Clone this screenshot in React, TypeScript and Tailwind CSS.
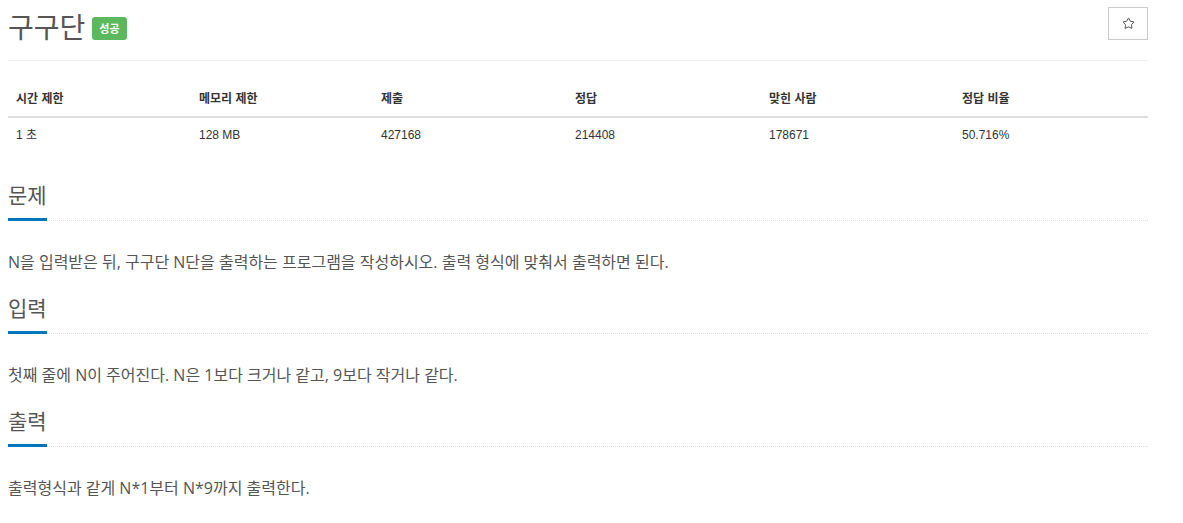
import { Star } from 'lucide-react';

const stats = [
  { label: '시간 제한', value: '1 초', w: 'w-[183px]' },
  { label: '메모리 제한', value: '128 MB', w: 'w-[182px]' },
  { label: '제출', value: '427168', w: 'w-[194px]' },
  { label: '정답', value: '214408', w: 'w-[194px]' },
  { label: '맞힌 사람', value: '178671', w: 'w-[193px]' },
  { label: '정답 비율', value: '50.716%', w: 'flex-1' },
];

const sections = [
  { title: '문제', body: 'N을 입력받은 뒤, 구구단 N단을 출력하는 프로그램을 작성하시오. 출력 형식에 맞춰서 출력하면 된다.' },
  { title: '입력', body: '첫째 줄에 N이 주어진다. N은 1보다 크거나 같고, 9보다 작거나 같다.' },
  { title: '출력', body: '출력형식과 같게 N*1부터 N*9까지 출력한다.' },
];

function Section({ title, body, first }: { title: string; body: string; first?: boolean }) {
  return (
    <section className={first ? 'mt-[28px]' : 'mt-[20px]'}>
      <div className="border-b border-dotted border-[#ddd]">
        <h2 className="-mb-px inline-block border-b-[3px] border-[#0076c0] pb-[8px] text-[21px] leading-[30px] text-[#555]">
          {title}
        </h2>
      </div>
      <p className="mt-[30px] text-[16px] leading-[22px] text-[#555]">{body}</p>
    </section>
  );
}

export default function App() {
  return (
    <div
      className="min-h-screen bg-white px-2"
      style={{ fontFamily: '"Open Sans", "Noto Sans CJK KR", sans-serif' }}
    >
      <div className="w-[1140px]">
        <div className="flex h-[61px] items-start justify-between border-b border-[#eee]">
          <div className="flex items-center gap-[7px] pt-[8px]">
            <h1 className="text-[28px] leading-[38px] text-[#555]">구구단</h1>
            <span className="mt-[3px] rounded-[3px] bg-[#5cb85c] px-[7px] py-[3px] text-[11px] font-bold leading-[17px] text-white">
              성공
            </span>
          </div>
          <button className="mt-[7px] flex h-[33px] w-[40px] items-center justify-center border border-[#ccc] bg-white">
            <Star size={13} strokeWidth={1.6} className="text-[#333]" />
          </button>
        </div>

        <div
          className="mt-[21px] text-[12px] text-[#333]"
          style={{ fontFamily: '"Liberation Sans", "Noto Sans CJK KR", sans-serif' }}
        >
          <div className="flex border-b-2 border-[#ddd]">
            {stats.map((s) => (
              <div key={s.label} className={`${s.w} px-2 py-[8px] font-bold leading-[18px]`}>
                {s.label}
              </div>
            ))}
          </div>
          <div className="flex">
            {stats.map((s) => (
              <div key={s.label} className={`${s.w} px-2 py-[8px] leading-[18px]`}>
                {s.value}
              </div>
            ))}
          </div>
        </div>

        {sections.map((s, i) => (
          <Section key={s.title} title={s.title} body={s.body} first={i === 0} />
        ))}
      </div>
    </div>
  );
}
